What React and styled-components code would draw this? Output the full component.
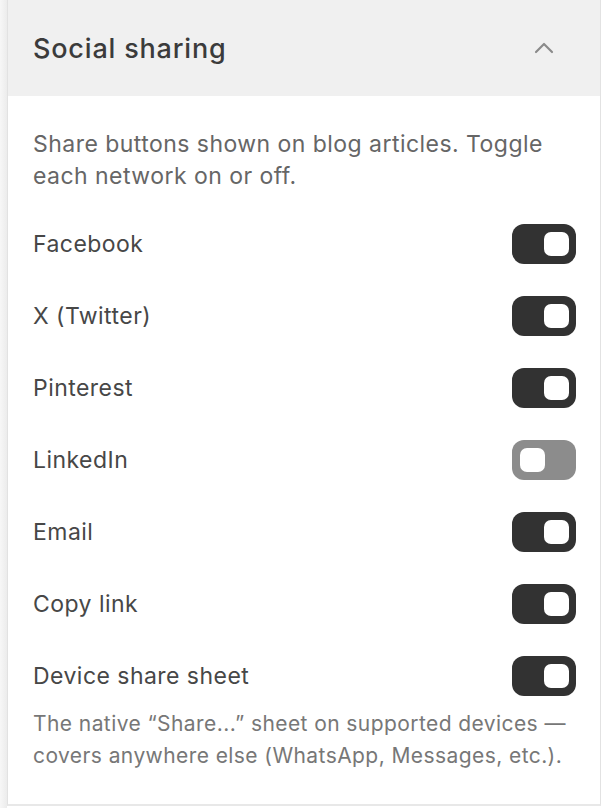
import React, { useState } from "react";
import styled, { createGlobalStyle } from "styled-components";

const GlobalStyle = createGlobalStyle`
    html, body {
        margin: 0;
        padding: 0;
        background: #ffffff;
        font-family: Inter, "Noto Sans", sans-serif;
    }
`;

const Page = styled.div`
    display: flex;
    min-height: 808px;`;

const Gutter = styled.div`
    width: 7px;
    flex: none;
    background: linear-gradient(to right, #f7f7f7, #ececec);`;

const Card = styled.section`
    flex: 1;
    margin-right: 1px;
    align-self: flex-start;
    border-left: 1px solid #e2e2e2;
    border-right: 1px solid #e2e2e2;
    border-bottom: 2px solid #e8e8e8;
    background: #ffffff;`;

const Header = styled.div`
    height: 96px;
    box-sizing: border-box;
    padding: 0 40px 0 25px;
    display: flex;
    align-items: center;
    justify-content: space-between;
    background: #f0f0f0;`;

const Title = styled.h2`
    margin: 0;
    font-size: 27px;
    font-weight: 500;
    color: #3b3b3b;
    letter-spacing: 0.03em;`;

const Chevron = styled.button`
    border: 0;
    padding: 0;
    background: none;
    display: flex;
    color: #8a8a8a;
    cursor: pointer;`;

const Body = styled.div`
    padding: 32px 24px 32px 25px;
    display: flex;
    flex-direction: column;
    gap: 32px;`;

const Text = styled.p`
    margin: 0;
    font-size: ${p => p.muted ? "21px" : "23px"};
    line-height: 32px;
    letter-spacing: 0.02em;
    color: ${p => p.muted ? "#777777" : "#666666"};`;

const Row = styled.div`
    display: flex;
    align-items: center;
    justify-content: space-between;
    height: 40px;`;

const Label = styled.span`
    font-size: 23px;
    letter-spacing: 0.02em;
    color: #474747;`;

const Toggle = styled.button`
    width: 64px;
    height: 40px;
    border: 0;
    border-radius: 12px;
    padding: 0 7px 0 8px;
    display: flex;
    align-items: center;
    justify-content: ${p => p.on ? "flex-end" : "flex-start"};
    background: ${p => p.on ? "#323232" : "#8c8c8c"};
    cursor: pointer;`;

const Knob = styled.span`
    width: 25px;
    height: 24px;
    border-radius: 7px;
    background: #ffffff;`;

const Group = styled.div`
    display: flex;
    flex-direction: column;
    gap: 12px;`;

const networks = [
    { name: "Facebook", on: true },
    { name: "X (Twitter)", on: true },
    { name: "Pinterest", on: true },
    { name: "LinkedIn", on: false },
    { name: "Email", on: true },
    { name: "Copy link", on: true },
];

export default function App() {
    const [state, setState] = useState(networks);
    const [share, setShare] = useState(true);

    const flip = name => setState(state.map(n => n.name == name ? { ...n, on: !n.on } : n));

    return (
        <Page>
            <GlobalStyle />
            <Gutter />
            <Card>
                <Header>
                    <Title>Social sharing</Title>
                    <Chevron aria-label="Collapse">
                        <svg width="32" height="32" viewBox="0 0 24 24" fill="none" stroke="currentColor" strokeWidth="1.6" strokeLinecap="round" strokeLinejoin="round">
                            <polyline points="6 15 12 9 18 15" />
                        </svg>
                    </Chevron>
                </Header>
                <Body>
                    <Text>Share buttons shown on blog articles. Toggle each network on or off.</Text>
                    {state.map(n => (
                        <Row key={n.name}>
                            <Label>{n.name}</Label>
                            <Toggle on={n.on} onClick={() => flip(n.name)}><Knob /></Toggle>
                        </Row>
                    ))}
                    <Group>
                        <Row>
                            <Label>Device share sheet</Label>
                            <Toggle on={share} onClick={() => setShare(!share)}><Knob /></Toggle>
                        </Row>
                        <Text muted>The native “Share...” sheet on supported devices — covers anywhere else (WhatsApp, Messages, etc.).</Text>
                    </Group>
                </Body>
            </Card>
        </Page>
    );
}
